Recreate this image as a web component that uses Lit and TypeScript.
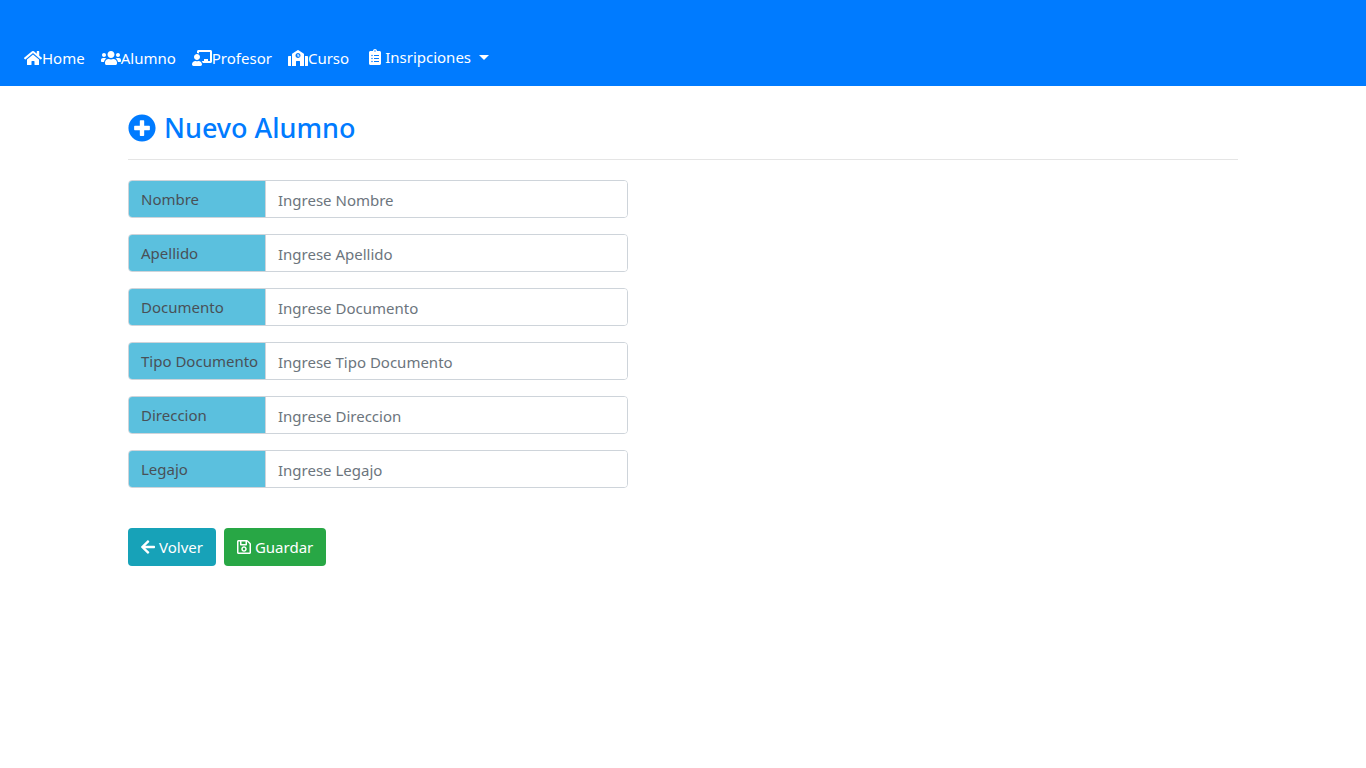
import { LitElement, html, css, svg } from "lit";
import { customElement, property } from "lit/decorators.js";

const ICONS: Record<string, { width: number; path: string }> = {
  home: {
    width: 576,
    path: "M280.37 148.26L96 300.11V464a16 16 0 0 0 16 16l112.06-.29a16 16 0 0 0 15.92-16V368a16 16 0 0 1 16-16h64a16 16 0 0 1 16 16v95.64a16 16 0 0 0 16 16.05L464 480a16 16 0 0 0 16-16V300L295.67 148.26a12.19 12.19 0 0 0-15.3 0zM571.6 251.47L488 182.56V44.05a12 12 0 0 0-12-12h-56a12 12 0 0 0-12 12v72.61L318.47 43a48 48 0 0 0-61 0L4.34 251.47a12 12 0 0 0-1.6 16.9l25.5 31A12 12 0 0 0 45.15 301l235.22-193.74a12.19 12.19 0 0 1 15.3 0L530.9 301a12 12 0 0 0 16.9-1.6l25.5-31a12 12 0 0 0-1.7-16.93z",
  },
  users: {
    width: 640,
    path: "M96 224c35.3 0 64-28.7 64-64s-28.7-64-64-64-64 28.7-64 64 28.7 64 64 64zm448 0c35.3 0 64-28.7 64-64s-28.7-64-64-64-64 28.7-64 64 28.7 64 64 64zm32 32h-64c-17.6 0-33.5 7.1-45.1 18.6 40.3 22.1 68.9 62 75.1 109.4h66c17.7 0 32-14.3 32-32v-32c0-35.3-28.7-64-64-64zm-256 0c61.9 0 112-50.1 112-112S381.9 32 320 32 208 82.1 208 144s50.1 112 112 112zm76.8 32h-8.3c-20.8 10-43.9 16-68.5 16s-47.6-6-68.5-16h-8.3C179.6 288 128 339.6 128 403.2V432c0 26.5 21.5 48 48 48h288c26.5 0 48-21.5 48-48v-28.8c0-63.6-51.6-115.2-115.2-115.2zm-223.7-13.4C161.5 263.1 145.6 256 128 256H64c-35.3 0-64 28.7-64 64v32c0 17.7 14.3 32 32 32h65.9c6.3-47.4 34.9-87.3 75.2-109.4z",
  },
  teacher: {
    width: 640,
    path: "M208 352c-2.39 0-4.78.35-7.06 1.09C187.98 357.3 174.35 360 160 360c-14.35 0-27.98-2.7-40.95-6.91-2.28-.74-4.66-1.09-7.05-1.09C49.94 352-.33 402.48 0 464.62.14 490.88 21.73 512 48 512h224c26.27 0 47.86-21.12 48-47.38.33-62.14-49.94-112.62-112-112.62zm-48-32c53.02 0 96-42.98 96-96s-42.98-96-96-96-96 42.98-96 96 42.98 96 96 96zM592 0H208c-26.47 0-48 22.25-48 49.59V96c23.42 0 45.1 6.78 64 17.8V64h352v288h-64v-64H384v64h-76.24c19.1 16.69 33.12 38.73 39.69 64H592c26.47 0 48-22.25 48-49.59V49.59C640 22.25 618.47 0 592 0z",
  },
  school: {
    width: 640,
    path: "M0 224v272c0 8.84 7.16 16 16 16h80V192H32c-17.67 0-32 14.33-32 32zm360-48h-24v-40c0-4.42-3.58-8-8-8h-16c-4.42 0-8 3.58-8 8v64c0 4.42 3.58 8 8 8h48c4.42 0 8-3.58 8-8v-16c0-4.42-3.58-8-8-8zm137.75-63.96l-160-106.67a32.02 32.02 0 0 0-35.5 0l-160 106.67A32.002 32.002 0 0 0 128 138.66V512h128V368c0-8.84 7.16-16 16-16h96c8.84 0 16 7.16 16 16v144h128V138.67c0-10.7-5.35-20.69-14.25-26.63zM320 256c-44.18 0-80-35.82-80-80s35.82-80 80-80 80 35.82 80 80-35.82 80-80 80zm288-64h-64v320h80c8.84 0 16-7.16 16-16V224c0-17.67-14.33-32-32-32z",
  },
  clipboard: {
    width: 384,
    path: "M336 64h-80c0-35.3-28.7-64-64-64s-64 28.7-64 64H48C21.5 64 0 85.5 0 112v352c0 26.5 21.5 48 48 48h288c26.5 0 48-21.5 48-48V112c0-26.5-21.5-48-48-48zM96 424c-13.3 0-24-10.7-24-24s10.7-24 24-24 24 10.7 24 24-10.7 24-24 24zm0-96c-13.3 0-24-10.7-24-24s10.7-24 24-24 24 10.7 24 24-10.7 24-24 24zm0-96c-13.3 0-24-10.7-24-24s10.7-24 24-24 24 10.7 24 24-10.7 24-24 24zm96-192c13.3 0 24 10.7 24 24s-10.7 24-24 24-24-10.7-24-24 10.7-24 24-24zm128 368c0 4.4-3.6 8-8 8H168c-4.4 0-8-3.6-8-8v-16c0-4.4 3.6-8 8-8h144c4.4 0 8 3.6 8 8v16zm0-96c0 4.4-3.6 8-8 8H168c-4.4 0-8-3.6-8-8v-16c0-4.4 3.6-8 8-8h144c4.4 0 8 3.6 8 8v16zm0-96c0 4.4-3.6 8-8 8H168c-4.4 0-8-3.6-8-8v-16c0-4.4 3.6-8 8-8h144c4.4 0 8 3.6 8 8v16z",
  },
  plus: {
    width: 512,
    path: "M256 8C119 8 8 119 8 256s111 248 248 248 248-111 248-248S393 8 256 8zm144 276c0 6.6-5.4 12-12 12h-92v92c0 6.6-5.4 12-12 12h-56c-6.6 0-12-5.4-12-12v-92h-92c-6.6 0-12-5.4-12-12v-56c0-6.6 5.4-12 12-12h92v-92c0-6.6 5.4-12 12-12h56c6.6 0 12 5.4 12 12v92h92c6.6 0 12 5.4 12 12v56z",
  },
  back: {
    width: 448,
    path: "M257.5 445.1l-22.2 22.2c-9.4 9.4-24.6 9.4-33.9 0L7 273c-9.4-9.4-9.4-24.6 0-33.9L201.4 44.7c9.4-9.4 24.6-9.4 33.9 0l22.2 22.2c9.5 9.5 9.3 25-.4 34.3L136.6 216H424c13.3 0 24 10.7 24 24v32c0 13.3-10.7 24-24 24H136.6l120.5 114.8c9.8 9.3 10 24.8.4 34.3z",
  },
  save: {
    width: 448,
    path: "M433.941 129.941l-83.882-83.882A48 48 0 0 0 316.118 32H48C21.49 32 0 53.49 0 80v352c0 26.51 21.49 48 48 48h352c26.51 0 48-21.49 48-48V163.882a48 48 0 0 0-14.059-33.941zM272 80v80H144V80h128zm122 352H54a6 6 0 0 1-6-6V86a6 6 0 0 1 6-6h42v104c0 13.255 10.745 24 24 24h176c13.255 0 24-10.745 24-24V83.882l78.243 78.243a6 6 0 0 1 1.757 4.243V426a6 6 0 0 1-6 6zM224 232c-48.523 0-88 39.477-88 88s39.477 88 88 88 88-39.477 88-88-39.477-88-88-88zm0 128c-22.056 0-40-17.944-40-40s17.944-40 40-40 40 17.944 40 40-17.944 40-40 40z",
  },
};

@customElement("app-icon")
class AppIcon extends LitElement {
  @property() name = "home";

  static styles = css`
    :host {
      display: inline-flex;
      flex: none;
      height: 1em;
    }
    svg {
      display: block;
      height: 100%;
      width: auto;
      fill: currentColor;
    }
  `;

  render() {
    const icon = ICONS[this.name];
    return html`<svg viewBox="0 0 ${icon.width} 512" aria-hidden="true">
      ${svg`<path d=${icon.path}></path>`}
    </svg>`;
  }
}

@customElement("app-root")
class AppRoot extends LitElement {
  private links = [
    { icon: "home", text: "Home" },
    { icon: "users", text: "Alumno" },
    { icon: "teacher", text: "Profesor" },
    { icon: "school", text: "Curso" },
  ];

  private fields = ["Nombre", "Apellido", "Documento", "Tipo Documento", "Direccion", "Legajo"];

  static styles = css`
    :host {
      display: block;
      min-height: 100vh;
      background: #fff;
      color: #212529;
      font-family: "Segoe UI", "Noto Sans", "Open Sans", sans-serif;
      font-size: 15px;
      line-height: 24px;
    }
    * {
      box-sizing: border-box;
    }
    app-icon {
      font-size: 16px;
    }
    .navbar {
      display: flex;
      align-items: center;
      gap: 16px;
      padding: 38px 24px 8px;
      background: #007bff;
    }
    .link {
      display: flex;
      align-items: center;
      padding: 8px 0;
      color: #fff;
      text-decoration: none;
    }
    .menu {
      display: flex;
      align-items: center;
      gap: 4px;
      padding: 6px 4px 8px;
      border: 0;
      background: none;
      color: #fff;
      font: inherit;
      cursor: pointer;
    }
    .caret {
      margin-left: 4px;
      border: 5px solid transparent;
      border-top-color: #fff;
      border-bottom: 0;
    }
    main {
      padding: 24px 128px;
    }
    .title {
      display: flex;
      align-items: center;
      gap: 8px;
      margin: 0;
      padding-bottom: 14px;
      border-bottom: 1px solid #e5e5e5;
      color: #007bff;
      font-size: 27px;
      font-weight: 500;
      line-height: 35px;
    }
    .title app-icon {
      font-size: 28px;
    }
    .form {
      display: flex;
      flex-direction: column;
      gap: 16px;
      max-width: 500px;
      margin-top: 20px;
    }
    .field {
      display: flex;
      height: 38px;
      border: 1px solid #ced4da;
      border-radius: 4px;
      overflow: hidden;
    }
    .label {
      flex: 0 0 137px;
      padding: 6px 0 6px 12px;
      border-right: 1px solid #ced4da;
      background: #5bc0de;
      color: #495057;
      white-space: nowrap;
    }
    .input {
      flex: 1;
      min-width: 0;
      padding: 8px 12px 6px;
      border: 0;
      outline: 0;
      background: #fff;
      color: #495057;
      font: inherit;
    }
    .input::placeholder {
      color: #6c757d;
      opacity: 1;
    }
    .actions {
      display: flex;
      gap: 8px;
      margin-top: 24px;
    }
    .button {
      display: flex;
      align-items: center;
      gap: 4px;
      height: 38px;
      padding: 0 13px;
      border: 0;
      border-radius: 4px;
      color: #fff;
      font: inherit;
      cursor: pointer;
    }
    .info {
      background: #17a2b8;
    }
    .success {
      background: #28a745;
    }
  `;

  render() {
    return html`
      <nav class="navbar">
        ${this.links.map(
          (l) => html`<a class="link" href="#"><app-icon name=${l.icon}></app-icon>${l.text}</a>`
        )}
        <button class="menu" type="button" aria-haspopup="true">
          <app-icon name="clipboard"></app-icon>Insripciones<span class="caret"></span>
        </button>
      </nav>
      <main>
        <h1 class="title"><app-icon name="plus"></app-icon>Nuevo Alumno</h1>
        <form class="form" @submit=${(e: Event) => e.preventDefault()}>
          ${this.fields.map((f) => {
            const id = f.toLowerCase().replace(" ", "-");
            return html`<div class="field">
              <label class="label" for=${id}>${f}</label>
              <input class="input" id=${id} type="text" placeholder="Ingrese ${f}" />
            </div>`;
          })}
          <div class="actions">
            <button class="button info" type="button"><app-icon name="back"></app-icon>Volver</button>
            <button class="button success" type="submit"><app-icon name="save"></app-icon>Guardar</button>
          </div>
        </form>
      </main>
    `;
  }
}
